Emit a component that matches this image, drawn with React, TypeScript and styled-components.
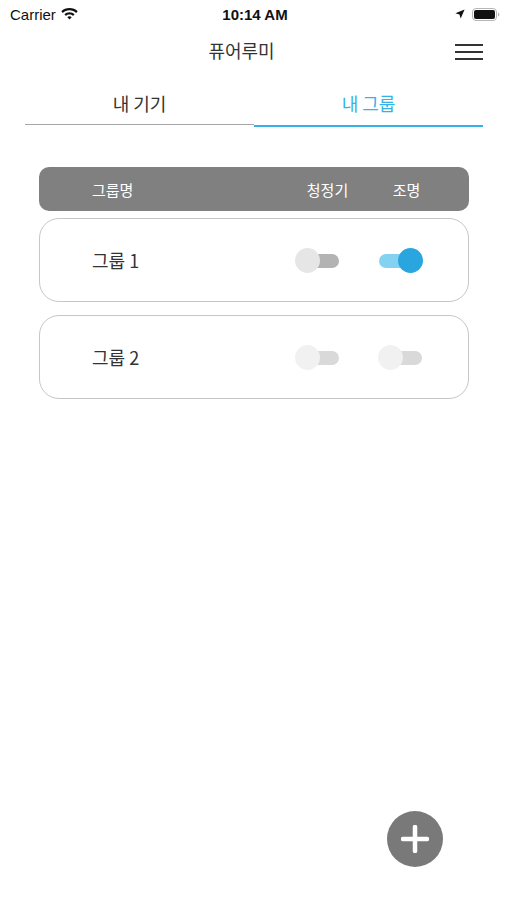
import React from 'react';
import styled, { createGlobalStyle } from 'styled-components';

const GlobalStyle = createGlobalStyle`
  html, body {
    margin: 0;
    padding: 0;
    background: #ffffff;
  }
  body {
    font-family: "Noto Sans CJK KR", "Noto Sans", sans-serif;
    color: #333333;
  }
`;

const Screen = styled.div`
  position: relative;
  width: 507px;
  height: 900px;
  overflow: hidden;
  background: #ffffff;
`;

const StatusBar = styled.div`
  height: 28px;
  display: grid;
  grid-template-columns: 1fr auto 1fr;
  align-items: center;
  padding: 0 7px 0 10px;
  font-family: "Liberation Sans", Arial, sans-serif;
  font-size: 15px;
  color: #111111;
`;

const StatusLeft = styled.div`
  display: flex;
  align-items: center;
  gap: 5px;
`;

const StatusTime = styled.div`
  font-weight: 700;
`;

const StatusRight = styled.div`
  display: flex;
  align-items: center;
  justify-content: flex-end;
  gap: 7px;
`;

const NavBar = styled.div`
  height: 46px;
  display: grid;
  grid-template-columns: 1fr auto 1fr;
  align-items: center;
  padding-right: 24px;
`;

const Title = styled.div`
  grid-column: 2;
  font-size: 18px;
  font-weight: 400;
  color: #333333;
  margin-top: -2px;
`;

const MenuButton = styled.div`
  justify-self: end;
  width: 28px;
  display: flex;
  flex-direction: column;
  gap: 5px;
  padding-top: 1px;
`;

const MenuLine = styled.span`
  display: block;
  height: 2px;
  background: #333333;
`;

const Tabs = styled.div`
  display: flex;
  margin: 0 24px 0 25px;
`;

const Tab = styled.div<{ $active?: boolean }>`
  flex: 1;
  height: 53px;
  box-sizing: border-box;
  padding-top: 6px;
  display: flex;
  align-items: center;
  justify-content: center;
  font-size: 18px;
  color: ${(p) => (p.$active ? '#35b3e6' : '#333333')};
  border-bottom: 2px solid ${(p) => (p.$active ? '#35b3e6' : 'transparent')};
  box-shadow: ${(p) => (p.$active ? 'none' : 'inset 0 -1px 0 #a6a6a6')};
`;

const Content = styled.div`
  margin: 40px 38px 0 39px;
  display: flex;
  flex-direction: column;
`;

const HeaderBar = styled.div`
  height: 44px;
  border-radius: 10px;
  background: #808080;
  display: flex;
  align-items: center;
  padding: 0 23px 0 53px;
  color: #ffffff;
  font-size: 15px;
  margin-bottom: 7px;
`;

const NameCell = styled.div`
  flex: 1;
`;

const HeadCell = styled.div`
  width: 79px;
  text-align: center;
`;

const RowList = styled.div`
  display: flex;
  flex-direction: column;
  gap: 13px;
`;

const GroupRow = styled.div`
  height: 84px;
  box-sizing: border-box;
  border: 1px solid #c6c6c6;
  border-radius: 20px;
  display: flex;
  align-items: center;
  padding: 0 26px 0 52px;
  font-size: 18px;
  color: #333333;
`;

const ToggleCell = styled.div`
  width: 83px;
  display: flex;
  justify-content: center;
`;

const SwitchBox = styled.div`
  position: relative;
  width: 45px;
  height: 25px;
`;

const Track = styled.span<{ $on: boolean; $disabled?: boolean }>`
  position: absolute;
  left: 1px;
  right: 1px;
  top: 6px;
  height: 14px;
  border-radius: 7px;
  background: ${(p) => (p.$disabled ? '#d9d9d9' : p.$on ? '#84d2f2' : '#b3b3b3')};
`;

const Thumb = styled.span<{ $on: boolean; $disabled?: boolean }>`
  position: absolute;
  top: 0;
  ${(p) => (p.$on ? 'right: 0;' : 'left: 0;')}
  width: 25px;
  height: 25px;
  border-radius: 50%;
  background: ${(p) => (p.$disabled ? '#f1f1f1' : p.$on ? '#29a6df' : '#e6e6e6')};
`;

const Fab = styled.div`
  position: absolute;
  right: 64px;
  bottom: 33px;
  width: 56px;
  height: 56px;
  border-radius: 50%;
  background: #797979;
  display: flex;
  align-items: center;
  justify-content: center;
`;

const Switch = ({ on, disabled }: { on: boolean; disabled?: boolean }) => (
  <SwitchBox>
    <Track $on={on} $disabled={disabled} />
    <Thumb $on={on} $disabled={disabled} />
  </SwitchBox>
);

const WifiIcon = () => (
  <svg width="17" height="12" viewBox="0 0 17 12">
    <path d="M8.5 0C5.3 0 2.4 1.2 0.3 3.2l1.6 1.7C3.6 3.3 5.9 2.3 8.5 2.3s4.9 1 6.6 2.6l1.6-1.7C14.6 1.2 11.7 0 8.5 0z" fill="#111" />
    <path d="M8.5 4.2c-2 0-3.8 0.8-5.1 2l1.6 1.7c0.9-0.9 2.1-1.4 3.5-1.4s2.6 0.5 3.5 1.4l1.6-1.7c-1.3-1.2-3.1-2-5.1-2z" fill="#111" />
    <path d="M8.5 8.3c-0.9 0-1.6 0.3-2.2 0.9L8.5 11.6l2.2-2.4c-0.6-0.6-1.3-0.9-2.2-0.9z" fill="#111" />
  </svg>
);

const LocationIcon = () => (
  <svg width="10" height="10" viewBox="0 0 10 10">
    <path d="M9.6 0.4L0.4 4.3l4.1 1.2 1.2 4.1z" fill="#111" />
  </svg>
);

const BatteryIcon = () => (
  <svg width="28" height="13" viewBox="0 0 28 13">
    <rect x="0.5" y="0.5" width="24" height="12" rx="3.5" fill="none" stroke="#b5b5b5" />
    <rect x="2" y="2" width="21" height="9" rx="2" fill="#111" />
    <path d="M26 4.5v4c0.8-0.3 1.4-1.1 1.4-2s-0.6-1.7-1.4-2z" fill="#b5b5b5" />
  </svg>
);

const PlusIcon = () => (
  <svg width="28" height="28" viewBox="0 0 28 28">
    <path d="M14 2v24M2 14h24" stroke="#ffffff" strokeWidth="4.5" strokeLinecap="round" />
  </svg>
);

const groups = [
  { name: '그룹 1', purifier: false, light: true, disabled: false },
  { name: '그룹 2', purifier: false, light: false, disabled: true },
];

const App: React.FC = () => (
  <Screen>
    <GlobalStyle />
    <StatusBar>
      <StatusLeft>
        Carrier
        <WifiIcon />
      </StatusLeft>
      <StatusTime>10:14 AM</StatusTime>
      <StatusRight>
        <LocationIcon />
        <BatteryIcon />
      </StatusRight>
    </StatusBar>
    <NavBar>
      <Title>퓨어루미</Title>
      <MenuButton>
        <MenuLine />
        <MenuLine />
        <MenuLine />
      </MenuButton>
    </NavBar>
    <Tabs>
      <Tab>내 기기</Tab>
      <Tab $active>내 그룹</Tab>
    </Tabs>
    <Content>
      <HeaderBar>
        <NameCell>그룹명</NameCell>
        <HeadCell>청정기</HeadCell>
        <HeadCell>조명</HeadCell>
      </HeaderBar>
      <RowList>
        {groups.map((g) => (
          <GroupRow key={g.name}>
            <NameCell>{g.name}</NameCell>
            <ToggleCell>
              <Switch on={g.purifier} disabled={g.disabled} />
            </ToggleCell>
            <ToggleCell>
              <Switch on={g.light} disabled={g.disabled} />
            </ToggleCell>
          </GroupRow>
        ))}
      </RowList>
    </Content>
    <Fab>
      <PlusIcon />
    </Fab>
  </Screen>
);

export default App;
